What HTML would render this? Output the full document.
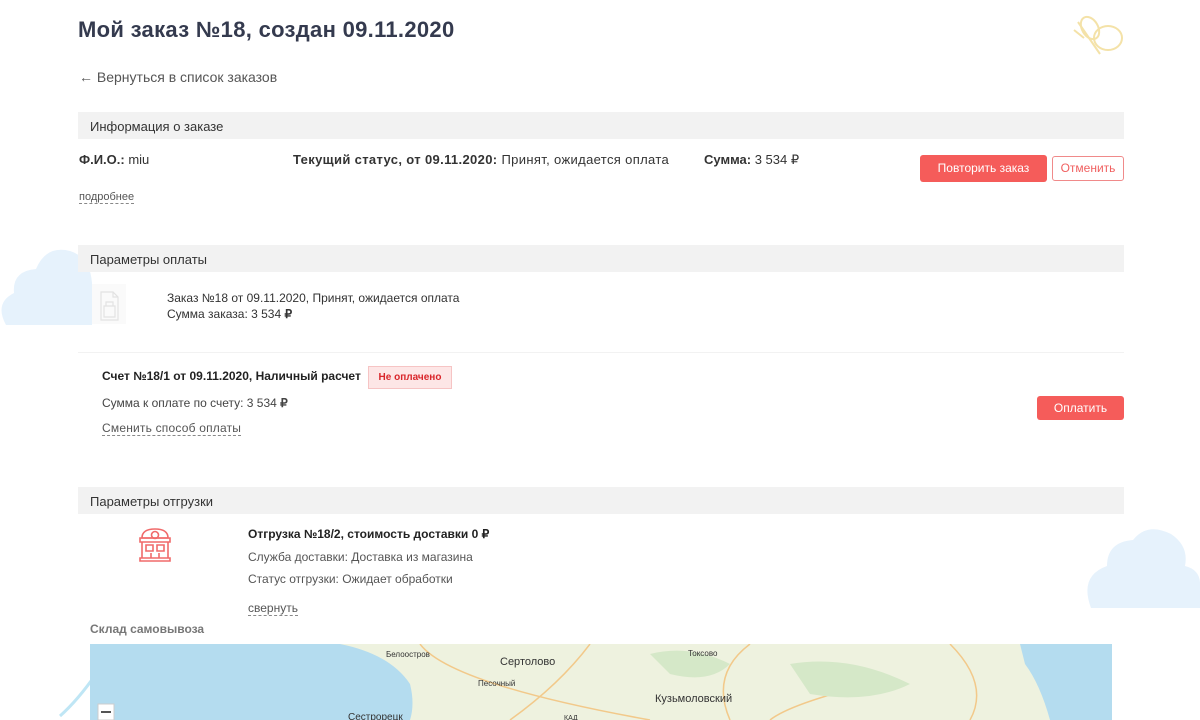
<!DOCTYPE html>
<html><head><meta charset="utf-8"><style>
*{margin:0;padding:0;box-sizing:border-box}
body{width:1200px;height:720px;overflow:hidden;background:#fff;font-family:"Liberation Sans",sans-serif;color:#333;position:relative}
.a{position:absolute;white-space:nowrap}
.bar{position:absolute;left:78px;width:1046px;height:27px;background:#f2f2f2;font-size:13px;color:#333;padding:7px 0 0 12px}
.dot{border-bottom:1px dashed #888}
.btn{position:absolute;background:#f55c5a;color:#fff;font-size:12px;text-align:center;border-radius:3px}
</style></head><body>
<svg class="a" style="left:0;top:243px" width="100" height="85"><path d="M6 82 Q-6 60 14 50 Q12 28 36 26 Q46 2 70 8 Q90 14 92 40 L92 82 Z" fill="#e6f2fc"/></svg>
<svg class="a" style="left:1085px;top:526px" width="115" height="84"><path d="M6 82 Q-6 50 22 40 Q22 16 48 14 Q62 -4 86 8 Q104 20 100 40 Q116 44 115 60 L115 82 Z" fill="#e6f2fc"/></svg>
<svg class="a" style="left:1070px;top:14px" width="58" height="46" fill="none" stroke="#f4e2a8" stroke-width="2"><ellipse cx="20" cy="14" rx="8" ry="12" transform="rotate(-30 20 14)"/><ellipse cx="38" cy="24" rx="14" ry="12"/><path d="M8 8 L30 40 M4 16 L14 24"/></svg>
<svg class="a" style="left:58px;top:670px" width="40" height="50"><path d="M38 4 Q20 30 2 46" stroke="#bfe6f5" stroke-width="3" fill="none"/></svg>

<div class="a" style="left:78px;top:17px;font-size:22px;font-weight:bold;color:#343a4e;letter-spacing:0.3px">Мой заказ №18, создан 09.11.2020</div>
<div class="a" style="left:79px;top:69px;font-size:14px;color:#555">← Вернуться в список заказов</div>

<div class="bar" style="top:112px">Информация о заказе</div>
<div class="a" style="left:79px;top:152px;font-size:13px;color:#333"><b>Ф.И.О.:</b> miu</div>
<div class="a" style="left:293px;top:152px;font-size:13px;color:#333;letter-spacing:0.35px"><b>Текущий статус, от 09.11.2020:</b> Принят, ожидается оплата</div>
<div class="a" style="left:704px;top:152px;font-size:13px;color:#333"><b>Сумма:</b> 3 534 ₽</div>
<div class="btn" style="left:920px;top:155px;width:127px;height:27px;line-height:27px">Повторить заказ</div>
<div class="a" style="left:1052px;top:156px;width:72px;height:25px;border:1px solid #f08a8a;border-radius:3px;color:#f06060;font-size:12px;text-align:center;line-height:23px">Отменить</div>
<div class="a dot" style="left:79px;top:191px;font-size:11px;color:#555">подробнее</div>

<div class="bar" style="top:245px">Параметры оплаты</div>
<svg class="a" style="left:92px;top:284px" width="34" height="40"><rect x="0" y="0" width="34" height="40" fill="#fafafa"/><path d="M9 8 H21 L26 13 V36 H9 Z M21 8 V13 H26 M12 22 H23 V33 H12 Z M14 22 V18 H21 V22" fill="none" stroke="#e2e2e2" stroke-width="1.2"/></svg>
<div class="a" style="left:167px;top:291px;font-size:12px;color:#333">Заказ №18 от 09.11.2020, Принят, ожидается оплата</div>
<div class="a" style="left:167px;top:307px;font-size:12px;color:#333">Сумма заказа: 3 534 <b>₽</b></div>
<div class="a" style="left:78px;top:352px;width:1046px;height:1px;background:#f2f2f2"></div>
<div class="a" style="left:102px;top:369px;font-size:12px;font-weight:bold;color:#222">Счет №18/1 от 09.11.2020, Наличный расчет</div>
<div class="a" style="left:368px;top:366px;width:84px;height:23px;background:#fde6e6;border:1px solid #f6c4c4;color:#d9262b;font-size:10px;font-weight:bold;text-align:center;line-height:21px">Не оплачено</div>
<div class="a" style="left:102px;top:396px;font-size:12px;color:#444">Сумма к оплате по счету: 3 534 <b>₽</b></div>
<div class="a dot" style="left:102px;top:421px;font-size:12px;color:#555;letter-spacing:0.2px">Сменить способ оплаты</div>
<div class="btn" style="left:1037px;top:396px;width:87px;height:24px;line-height:24px">Оплатить</div>

<div class="bar" style="top:487px">Параметры отгрузки</div>
<svg class="a" style="left:136px;top:526px" width="38" height="38" fill="none" stroke="#f06a6a" stroke-width="1.6"><path d="M6 12 Q6 3 19 3 Q32 3 32 12 Z"/><circle cx="19" cy="9" r="3.5"/><path d="M4 12 H34 V16 H4 Z M6 16 V32 H32 V16 M10 19 H17 V25 H10 Z M21 19 H28 V25 H21 Z M15 27 V32 M23 27 V32 M4 32 H34 V35 H4 Z"/></svg>
<div class="a" style="left:248px;top:527px;font-size:12px;font-weight:bold;color:#222">Отгрузка №18/2, стоимость доставки 0 ₽</div>
<div class="a" style="left:248px;top:550px;font-size:12px;color:#555">Служба доставки: Доставка из магазина</div>
<div class="a" style="left:248px;top:572px;font-size:12px;color:#555">Статус отгрузки: Ожидает обработки</div>
<div class="a dot" style="left:248px;top:601px;font-size:12px;color:#555">свернуть</div>
<div class="a" style="left:90px;top:622px;font-size:12px;font-weight:bold;color:#777">Склад самовывоза</div>

<svg class="a" style="left:90px;top:644px" width="1022" height="76">
<rect width="1022" height="76" fill="#eef2df"/>
<path d="M0 0 H250 Q300 10 320 40 Q325 60 320 76 H0 Z" fill="#b4dcef"/>
<path d="M930 0 H1022 V76 H960 Q950 40 935 20 Z" fill="#b4dcef"/>
<path d="M330 0 Q360 40 560 76 M500 0 Q470 40 420 76 M660 0 Q620 30 640 76 M780 40 Q700 60 680 76 M860 0 Q900 40 880 76" stroke="#f2c98a" stroke-width="1.5" fill="none"/>
<path d="M560 10 Q600 0 640 20 Q620 40 580 30 Z M700 20 Q760 10 820 40 Q780 60 720 50 Z" fill="#d5e8c8"/>
<rect x="8" y="60" width="16" height="16" fill="#fff" stroke="#ccc"/><rect x="11" y="67" width="10" height="2" fill="#555"/>
<g font-family="Liberation Sans,sans-serif" fill="#333"><text x="296" y="13" font-size="8">Белоостров</text><text x="410" y="21" font-size="11">Сертолово</text><text x="388" y="42" font-size="8">Песочный</text><text x="598" y="12" font-size="8">Токсово</text><text x="565" y="58" font-size="11">Кузьмоловский</text><text x="258" y="76" font-size="10">Сестрорецк</text><text x="474" y="76" font-size="7">КАД</text></g>
</svg>
</body></html>
